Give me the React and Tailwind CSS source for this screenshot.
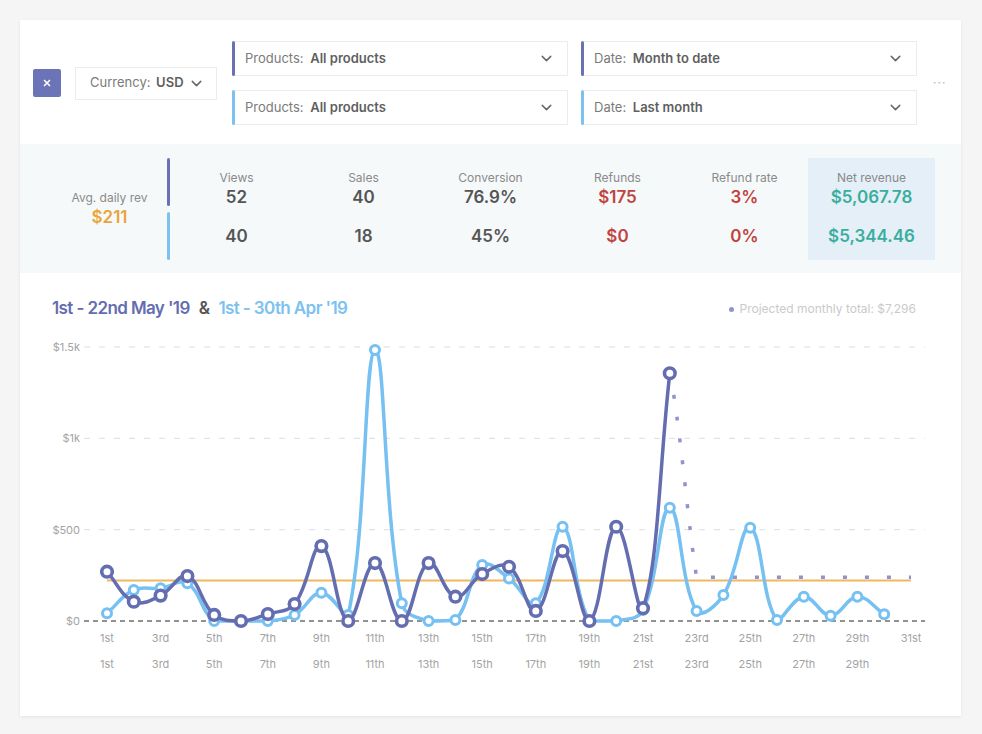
import { ChevronDown, X } from 'lucide-react';

const MAY = [270, 106, 139, 246, 33, 0, 38, 93, 410, 0, 317, 0, 317, 133, 257, 297, 55, 383, 0, 516, 70, 1356];
const APR = [42, 170, 179, 206, 0, 0, 0, 33, 155, 33, 1483, 97, 0, 5, 306, 233, 97, 516, 0, 0, 60, 620, 55, 142, 511, 5, 133, 29, 133, 37];

const xOf = (i) => 107 + i * 26.8;
const yOf = (v) => 621 - v * 0.18267;
const clampY = (y) => Math.min(621, Math.max(340, y));

// chart.js style spline, tension 0.4, control points capped to the chart area
function splinePath(values) {
  const pts = values.map((v, i) => [xOf(i), yOf(v)]);
  const t = 0.4;
  const cps = pts.map((p, i) => {
    const p0 = pts[i - 1] || p;
    const p2 = pts[i + 1] || p;
    const d01 = Math.hypot(p[0] - p0[0], p[1] - p0[1]);
    const d12 = Math.hypot(p2[0] - p[0], p2[1] - p[1]);
    const sum = d01 + d12 || 1;
    const fa = (t * d01) / sum;
    const fb = (t * d12) / sum;
    return {
      prev: [p[0] - fa * (p2[0] - p0[0]), clampY(p[1] - fa * (p2[1] - p0[1]))],
      next: [p[0] + fb * (p2[0] - p0[0]), clampY(p[1] + fb * (p2[1] - p0[1]))],
    };
  });
  let d = `M${pts[0][0]},${pts[0][1]}`;
  for (let i = 1; i < pts.length; i++) {
    const a = cps[i - 1].next;
    const b = cps[i].prev;
    d += ` C${a[0]},${a[1]} ${b[0]},${b[1]} ${pts[i][0]},${pts[i][1]}`;
  }
  return d;
}

const DAYS = ['1st', '3rd', '5th', '7th', '9th', '11th', '13th', '15th', '17th', '19th', '21st', '23rd', '25th', '27th', '29th', '31st'];

function FilterBox({ label, value, color }) {
  return (
    <div className="flex h-[35px] w-[336px] items-stretch">
      <div className="w-[3px] rounded-full" style={{ backgroundColor: color }} />
      <div className="flex flex-1 items-center justify-between border border-l-0 border-[#ececec] pl-[10px] pr-[12px]">
        <span className="text-[13px] text-[#7a7a7a]">
          {label}: <span className="ml-[3px] font-semibold text-[#5f5f5f]">{value}</span>
        </span>
        <ChevronDown size={17} strokeWidth={2} className="text-[#666]" />
      </div>
    </div>
  );
}

function Stat({ label, a, b, color, highlight }) {
  return (
    <div className={`flex flex-col items-center pt-[12px] pb-[13px] ${highlight ? 'bg-[#e4eff8]' : ''}`}>
      <div className="h-[16px] text-[12px] leading-[16px] text-[#8a8a8a]">{label}</div>
      <div className="h-[22px] text-[17px] font-semibold leading-[22px]" style={{ color }}>{a}</div>
      <div className="mt-[17px] h-[22px] text-[17px] font-semibold leading-[22px]" style={{ color }}>{b}</div>
    </div>
  );
}

function Chart() {
  const grid = [
    { v: 1500, l: '$1.5k' },
    { v: 1000, l: '$1k' },
    { v: 500, l: '$500' },
  ];
  return (
    <svg width="941" height="370" viewBox="20 330 941 370" className="block">
      {grid.map((g) => (
        <g key={g.l}>
          <text x="80" y={yOf(g.v) + 4} textAnchor="end" fontSize="11" fill="#a3a3a3">{g.l}</text>
          <line x1="84" x2="925" y1={yOf(g.v)} y2={yOf(g.v)} stroke="#dedede" strokeWidth="1" strokeDasharray="6 9" />
        </g>
      ))}
      <text x="80" y={625} textAnchor="end" fontSize="11" fill="#a3a3a3">$0</text>
      <line x1="84" x2="925" y1="621" y2="621" stroke="#6f6f6f" strokeWidth="1.3" strokeDasharray="5 4" />
      <line x1="107" x2="911" y1="580.5" y2="580.5" stroke="#f0b85e" strokeWidth="2" />
      {DAYS.map((d, i) => (
        <g key={d}>
          <text x={xOf(i * 2)} y="642" textAnchor="middle" fontSize="11" fill="#a3a3a3">{d}</text>
          {i < 15 && (
            <text x={xOf(i * 2)} y="668" textAnchor="middle" fontSize="11" fill="#a3a3a3">{d}</text>
          )}
        </g>
      ))}
      <path
        d={`M${xOf(21)},${yOf(1356)} C${xOf(21) + 10},${yOf(1100)} ${xOf(22) - 8},${yOf(500)} ${xOf(22)},${yOf(240)} L${xOf(30)},${yOf(240)}`}
        fill="none"
        stroke="#8f94cc"
        strokeWidth="3.5"
        strokeDasharray="4 18"
      />
      <path d={splinePath(APR)} fill="none" stroke="#76c0f2" strokeWidth="3.5" />
      {APR.map((v, i) => (
        <circle key={`a${i}`} cx={xOf(i)} cy={yOf(v)} r="4.5" fill="#fff" stroke="#76c0f2" strokeWidth="3" />
      ))}
      <path d={splinePath(MAY)} fill="none" stroke="#646db0" strokeWidth="3.5" />
      {MAY.map((v, i) => (
        <circle key={`m${i}`} cx={xOf(i)} cy={yOf(v)} r="5.3" fill="#fff" stroke="#646db0" strokeWidth="3.6" />
      ))}
    </svg>
  );
}

export default function App() {
  return (
    <div className="min-h-[734px] bg-[#f5f5f5] pt-[20px] font-['Inter',sans-serif]">
      <div className="ml-[20px] w-[941px] bg-white shadow-[0_1px_3px_rgba(0,0,0,0.08)]">
        {/* filters */}
        <div className="flex h-[124px] items-center pt-[2px] pl-[13px]">
          <div className="flex h-[28px] w-[28px] items-center justify-center rounded-[2px] bg-[#6b74b7]">
            <X size={10} strokeWidth={4} className="text-white" />
          </div>
          <div className="ml-[14px] flex h-[33px] w-[142px] items-center justify-between border border-[#ececec] pl-[14px] pr-[11px]">
            <span className="text-[13px] text-[#7a7a7a]">
              Currency: <span className="ml-[2px] font-semibold text-[#5f5f5f]">USD</span>
            </span>
            <ChevronDown size={17} strokeWidth={2} className="text-[#666]" />
          </div>
          <div className="ml-[15px] flex flex-col gap-[14px]">
            <FilterBox label="Products" value="All products" color="#6a72b4" />
            <FilterBox label="Products" value="All products" color="#7cc2f0" />
          </div>
          <div className="ml-[13px] flex flex-col gap-[14px]">
            <FilterBox label="Date" value="Month to date" color="#6a72b4" />
            <FilterBox label="Date" value="Last month" color="#7cc2f0" />
          </div>
          <div className="ml-[16px] text-[12px] leading-none tracking-[1px] text-[#b5b5b5]">···</div>
        </div>

        {/* stats */}
        <div className="flex h-[129px] items-center bg-[#f6f9fa]">
          <div className="flex w-[147px] flex-col items-center pl-[32px]">
            <div className="text-[12px] leading-[16px] text-[#8a8a8a]">Avg. daily rev</div>
            <div className="text-[17px] font-semibold leading-[22px] text-[#e9a53a]">$211</div>
          </div>
          <div className="flex h-[102px] w-[3px] flex-col gap-[6px]">
            <div className="h-[48px] rounded-full bg-[#6a72b4]" />
            <div className="h-[48px] rounded-full bg-[#7cc2f0]" />
          </div>
          <div className="ml-[3px] grid w-[762px] grid-cols-6">
            <Stat label="Views" a="52" b="40" color="#555" />
            <Stat label="Sales" a="40" b="18" color="#555" />
            <Stat label="Conversion" a="76.9%" b="45%" color="#555" />
            <Stat label="Refunds" a="$175" b="$0" color="#c2433e" />
            <Stat label="Refund rate" a="3%" b="0%" color="#c2433e" />
            <Stat label="Net revenue" a="$5,067.78" b="$5,344.46" color="#3aae9e" highlight />
          </div>
        </div>

        {/* chart */}
        <div className="pt-[24px] pb-[16px]">
          <div className="flex h-[24px] items-center justify-between pl-[32px] pr-[45px]">
            <div className="text-[17px] font-semibold tracking-[-0.6px]">
              <span className="text-[#646db0]">1st - 22nd May '19</span>
              <span className="mx-[9px] text-[#555]">&amp;</span>
              <span className="text-[#7cc2f0]">1st - 30th Apr '19</span>
            </div>
            <div className="flex items-center text-[12px] text-[#cacaca]">
              <span className="mr-[6px] inline-block h-[5px] w-[5px] rounded-full bg-[#8f94cc]" />
              Projected monthly total: $7,296
            </div>
          </div>
          <div className="mt-[9px]">
            <Chart />
          </div>
        </div>
      </div>
    </div>
  );
}
